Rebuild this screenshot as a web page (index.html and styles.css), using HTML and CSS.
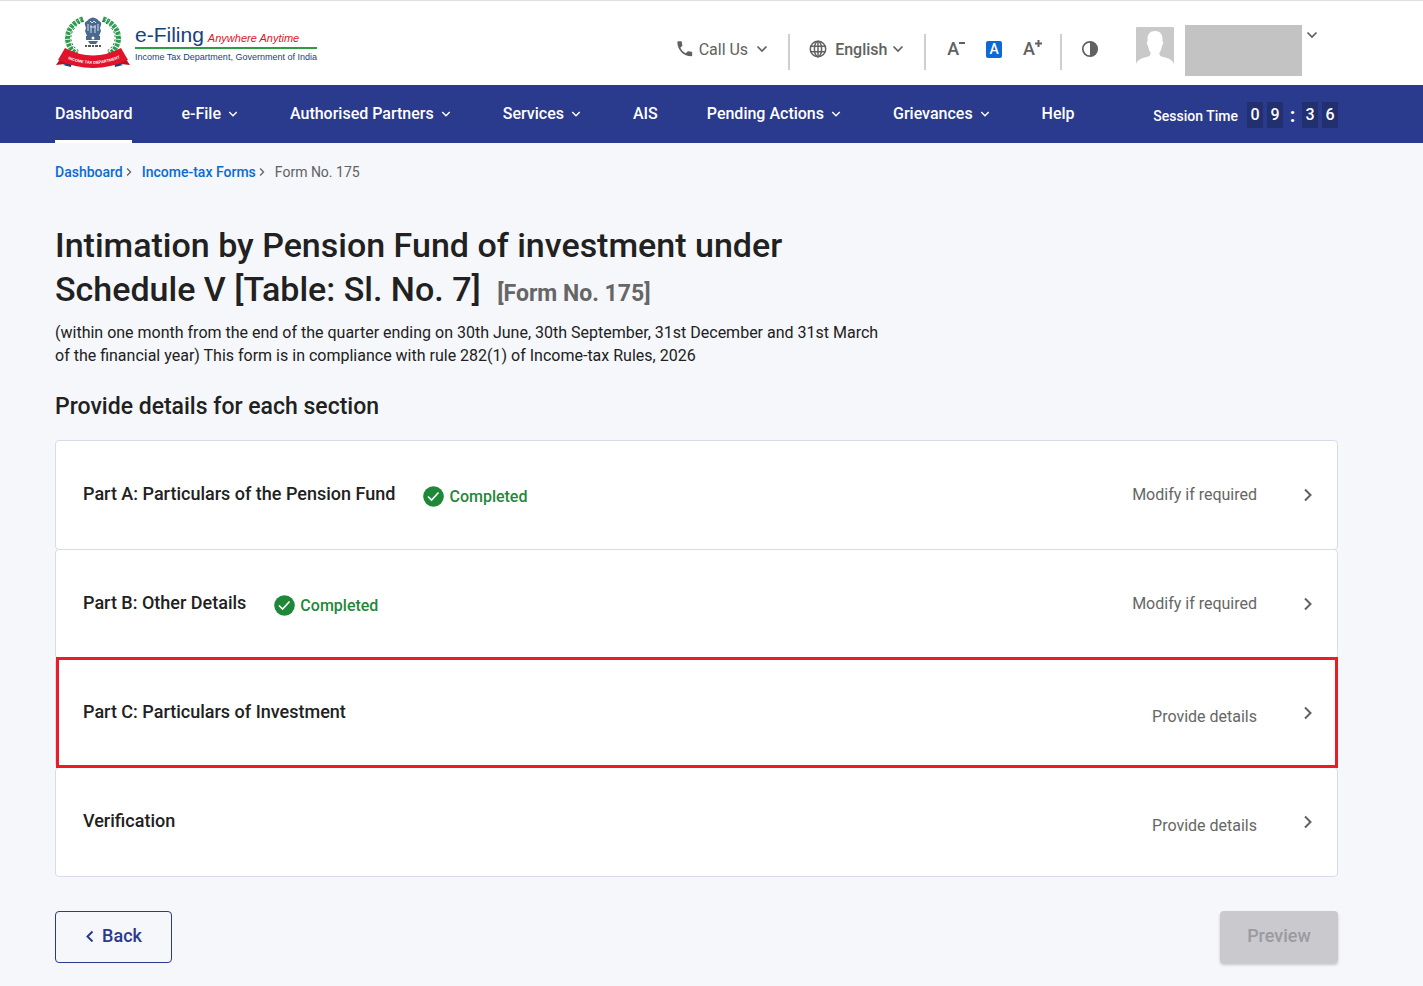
FILE: index.html
```
<!DOCTYPE html>
<html lang="en">
<head>
    <meta charset="UTF-8">
    <meta name="viewport" content="width=device-width, initial-scale=1.0">
    <title>Form No. 175 - e-Filing</title>
    <link rel="stylesheet" href="styles.css">
</head>
<body>

<!-- Shared icons -->
<svg class="sprite" aria-hidden="true">
    <symbol id="chevron" viewBox="0 0 12 12"><path d="M1.5 3.5 6 8l4.500-4.500" fill="none" stroke="currentColor" stroke-width="1.700"/></symbol>
    <symbol id="chevron-right" viewBox="0 0 12 16"><path d="M3 2.500l5.500 5.500L3 13.500" fill="none" stroke="currentColor" stroke-width="2"/></symbol>
    <symbol id="check" viewBox="0 0 21 21"><circle cx="10.500" cy="10.500" r="10.300" fill="#1f8838"/><path d="M5 10.500l3.600 3.600L15.500 6.500" fill="none" stroke="#fff" stroke-width="1.600"/></symbol>
</svg>

<header class="header">
    <a class="logo" href="#">
        <svg class="emblem" viewBox="0 0 76 54" role="img" aria-label="Income Tax Department emblem">
            <!-- wreath -->
            <path d="M28 3C9 9 8 30 22 38M48 3c19 6 20 27 6 35" fill="none" stroke="#2f9b50" stroke-width="5" stroke-dasharray="3 1"/>
            <path d="M26 3C7 10 6 29 19 38M50 3c19 7 20 26 7 35" fill="none" stroke="#9bd3aa" stroke-width="1" stroke-dasharray="1 2"/>
            <path d="M29 5C13 12 12 28 24 35M47 5c16 7 17 23 5 30" fill="none" stroke="#147a38" stroke-width="1" stroke-dasharray="2 2"/>
            <!-- lion capital -->
            <path d="M34 3q4-3 8 0l2 2q3 1 2 4l-1 3 1 3-2 5H32l-2-5 1-3-1-3q-1-3 2-4z" fill="#49698f"/>
            <path d="M35 5l2 2 2-2 2 2M36 9v8M40 9v8M33 8v7M43 8v7M35 11h6" fill="none" stroke="#d7e1ec" stroke-width="1"/>
            <path d="M31 20h14v4H31zM33 25h10l-2 3h-6z" fill="#49698f"/>
            <circle cx="38" cy="22" r="1.500" fill="#fff"/>
            <path d="M30 30h16" stroke="#222" stroke-width="1.500" stroke-dasharray="2 1 3 1"/>
            <!-- ribbon -->
            <path d="M1 49l7-10 8 1 2 9-8-1zM75 49l-7-10-8 1-2 9 8-1z" fill="#b5121b"/>
            <path d="M8 49l9-4-1 6zM68 49l-9-4 1 6z" fill="#17427e"/>
            <path d="M10 32Q38 47 66 32l7 12Q38 60 3 44z" fill="#e3122b"/>
            <path id="ribbon-line" d="M8 41Q38 55 70 40" fill="none"/>
            <text class="ribbon-text"><textPath href="#ribbon-line" startOffset="50%">INCOME TAX DEPARTMENT</textPath></text>
        </svg>
        <span class="logo-words">
            <span class="logo-top"><span class="logo-name">e-Filing</span><em class="logo-tag">Anywhere Anytime</em></span>
            <span class="logo-dept">Income Tax Department, Government of India</span>
        </span>
    </a>

    <div class="tools">
        <button class="tool call" type="button">
            <svg width="18" height="18" viewBox="0 0 24 24" fill="currentColor"><path d="M6.620 10.790c1.440 2.830 3.760 5.140 6.590 6.590l2.200-2.200c.27-.27.67-.36 1.020-.24 1.120.37 2.330.57 3.570.57.55 0 1 .45 1 1V20c0 .55-.45 1-1 1C10.610 21 3 13.390 3 4c0-.55.45-1 1-1h3.500c.55 0 1 .45 1 1 0 1.250.2 2.450.57 3.570.11.35.03.74-.25 1.020l-2.200 2.200z" transform="translate(-1.500 -1.500) scale(1.100)"/></svg>
            <span>Call Us</span>
            <svg width="12" height="12"><use href="#chevron"/></svg>
        </button>
        <span class="divider"></span>
        <label class="tool language">
            <svg width="18" height="18" viewBox="0 0 18 18" fill="none" stroke="currentColor" stroke-width="1.500"><circle cx="9" cy="9" r="7.700"/><ellipse cx="9" cy="9" rx="3.600" ry="7.700"/><path d="M1.500 6.300h15M1.500 11.700h15M9 1v16"/></svg>
            <select aria-label="Language"><option>English</option></select>
            <svg width="12" height="12"><use href="#chevron"/></svg>
        </label>
        <span class="divider"></span>
        <div class="font-sizes">
            <button class="tool size" type="button" aria-label="Decrease font size">A<svg width="6" height="6" viewBox="0 0 6 6"><path d="M0 3h6" stroke="currentColor" stroke-width="2"/></svg></button>
            <button class="tool" type="button" aria-label="Normal font size"><span class="size-current">A</span></button>
            <button class="tool size" type="button" aria-label="Increase font size">A<svg width="7" height="7" viewBox="0 0 7 7"><path d="M0 3.500h7M3.500 0v7" stroke="currentColor" stroke-width="2"/></svg></button>
        </div>
        <span class="divider"></span>
        <button class="tool" type="button" aria-label="Contrast">
            <svg width="18" height="18" viewBox="0 0 18 18"><circle cx="9" cy="9" r="7.200" fill="none" stroke="currentColor" stroke-width="1.700"/><path d="M9 1.500a7.500 7.500 0 0 1 0 15z" fill="currentColor"/></svg>
        </button>
        <div class="profile">
            <svg class="avatar" width="38" height="38" viewBox="0 0 38 38"><rect width="38" height="38" rx="1" fill="#c9c9c9"/><path d="M19 4c5 0 7.500 3 7.500 8v2q1.500 2-.5 5-.5 4-2.500 6.500c-.5 3 1 4 4 4.500 5 1 9 3 10.500 7v1H0v-1c1.500-4 5.500-6 10.500-7 3-.5 4.500-1.500 4-4.500q-2-2.500-2.500-6.500-2-3-.5-5v-2c0-5 2.500-8 7.500-8z" fill="#fff"/></svg>
            <span class="profile-name"></span>
            <button class="profile-menu" type="button" aria-label="Profile menu"><svg width="12" height="12"><use href="#chevron"/></svg></button>
        </div>
    </div>
</header>

<nav class="navbar">
    <div class="menu">
        <a class="active" href="#">Dashboard</a>
        <a href="#">e-File<svg width="16" height="10" viewBox="-2 1 16 10"><use href="#chevron" x="1" y="1" width="10" height="10"/></svg></a>
        <a href="#">Authorised Partners<svg width="16" height="10" viewBox="-2 1 16 10"><use href="#chevron" x="1" y="1" width="10" height="10"/></svg></a>
        <a href="#">Services<svg width="16" height="10" viewBox="-2 1 16 10"><use href="#chevron" x="1" y="1" width="10" height="10"/></svg></a>
        <a href="#">AIS</a>
        <a href="#">Pending Actions<svg width="16" height="10" viewBox="-2 1 16 10"><use href="#chevron" x="1" y="1" width="10" height="10"/></svg></a>
        <a href="#">Grievances<svg width="16" height="10" viewBox="-2 1 16 10"><use href="#chevron" x="1" y="1" width="10" height="10"/></svg></a>
        <a href="#">Help</a>
    </div>
    <div class="session">
        <span class="session-label">Session Time</span>
        <span class="digit">0</span>
        <span class="digit">9</span>
        <span class="colon">:</span>
        <span class="digit">3</span>
        <span class="digit">6</span>
    </div>
</nav>

<main class="content">
    <nav class="breadcrumb" aria-label="Breadcrumb">
        <a href="#">Dashboard</a>
        <svg width="8" height="10" viewBox="0 0 12 16"><use href="#chevron-right"/></svg>
        <a href="#">Income-tax Forms</a>
        <svg width="8" height="10" viewBox="0 0 12 16"><use href="#chevron-right"/></svg>
        <span>Form No. 175</span>
    </nav>

    <div class="form-heading">
        <h1>Intimation by Pension Fund of investment under Schedule V [Table: Sl. No. 7] <span class="form-no">[Form No. 175]</span></h1>
        <p class="description">(within one month from the end of the quarter ending on 30th June, 30th September, 31st December and 31st March of the financial year) This form is in compliance with rule 282(1) of Income-tax Rules, 2026</p>
    </div>

    <h2>Provide details for each section</h2>

    <div class="sections">
        <a class="section" href="#">
            <span class="section-title">Part A: Particulars of the Pension Fund</span>
            <span class="status"><svg width="21" height="21"><use href="#check"/></svg>Completed</span>
            <span class="action">Modify if required</span>
            <svg class="arrow" width="12" height="16"><use href="#chevron-right"/></svg>
        </a>
        <a class="section" href="#">
            <span class="section-title">Part B: Other Details</span>
            <span class="status"><svg width="21" height="21"><use href="#check"/></svg>Completed</span>
            <span class="action">Modify if required</span>
            <svg class="arrow" width="12" height="16"><use href="#chevron-right"/></svg>
        </a>
        <a class="section highlight" href="#">
            <span class="section-title">Part C: Particulars of Investment</span>
            <span class="action pending">Provide details</span>
            <svg class="arrow" width="12" height="16"><use href="#chevron-right"/></svg>
        </a>
        <a class="section" href="#">
            <span class="section-title">Verification</span>
            <span class="action pending">Provide details</span>
            <svg class="arrow" width="12" height="16"><use href="#chevron-right"/></svg>
        </a>
    </div>

    <div class="buttons">
        <button class="btn back" type="button"><svg width="9" height="13" viewBox="0 0 9 13"><path d="M7.500 2.500l-5 5 5 5" fill="none" stroke="currentColor" stroke-width="2"/></svg>Back</button>
        <button class="btn preview" type="button" disabled>Preview</button>
    </div>
</main>

</body>
</html>
```
FILE: styles.css
```
* {
    box-sizing: border-box;
}
body {
    margin: 0;
    background-color: #f5f7fb;
    color: #212121;
    font-family: Roboto, "Liberation Sans", sans-serif;
    font-size: 16px;
}
a {
    color: inherit;
    text-decoration: none;
}
button, select {
    padding: 0;
    border: none;
    background: none;
    color: inherit;
    font: inherit;
    cursor: pointer;
}
svg {
    flex: none;
}
.sprite {
    display: none;
}

/* Header */
.header {
    display: flex;
    justify-content: space-between;
    height: 85px;
    padding: 0 105px 0 55px;
    border-top: 1px solid #e0e0e0;
    background-color: white;
}
.logo {
    display: flex;
    gap: 4px;
    padding-top: 15px;
}
.emblem {
    width: 76px;
    height: 54px;
}
.ribbon-text {
    fill: white;
    font-family: "Liberation Sans", sans-serif;
    font-size: 4px;
    font-weight: bold;
    text-anchor: middle;
}
.logo-words {
    display: flex;
    flex-direction: column;
    padding-top: 6px;
    color: #17427e;
    font-family: "Liberation Sans", sans-serif;
    white-space: nowrap;
}
.logo-top {
    display: flex;
    align-items: baseline;
    gap: 4px;
    height: 27px;
    border-bottom: 2px solid #2f9b44;
    line-height: 25px;
}
.logo-name {
    font-size: 21px;
}
.logo-tag {
    color: #e3122b;
    font-size: 11px;
}
.logo-dept {
    font-size: 9px;
    line-height: 16px;
}
.tools {
    display: flex;
    align-items: center;
    height: 36px;
    margin-top: 33px;
    color: #616161;
}
.tool {
    display: flex;
    align-items: center;
    padding-bottom: 6px;
}
.call span {
    margin: 0 8px 0 5px;
}
.divider {
    width: 2px;
    height: 36px;
    margin: 0 19px 0 20px;
    background-color: #cfcfcf;
}
.language {
    font-weight: 500;
}
.language select {
    margin: 0 4px 0 8px;
    appearance: none;
}
.font-sizes {
    display: flex;
    align-items: center;
    gap: 21px;
    margin-left: 2px;
    margin-right: -2px;
}
.size {
    align-items: flex-start;
    font-size: 18px;
    font-weight: 500;
    line-height: 18px;
}
.size-current {
    width: 16px;
    border-radius: 2px;
    background-color: #0b6bd3;
    color: white;
    font-size: 14px;
    font-weight: 500;
    line-height: 17px;
}
.profile {
    display: flex;
    align-items: flex-start;
    height: 54px;
    margin-left: 37px;
}
.avatar {
    margin-top: 2px;
}
.profile-name {
    width: 117px;
    height: 51px;
    margin: 0 4px 0 11px;
    background-color: #c3c3c3;
}
.profile-menu {
    padding-top: 4px;
    line-height: 12px;
}

/* Navigation */
.navbar {
    display: flex;
    justify-content: space-between;
    height: 58px;
    padding: 0 85px 0 55px;
    background-color: #2a3a8c;
    color: white;
    font-weight: 500;
}
.menu {
    display: flex;
    gap: 49px;
    white-space: nowrap;
}
.menu a {
    display: flex;
    align-items: center;
    padding-top: 2px;
    border-bottom: 3px solid transparent;
}
.menu a svg {
    margin-left: 4px;
}
.menu .active {
    border-bottom-color: white;
}
.session {
    display: flex;
    align-items: center;
    gap: 4px;
    padding-top: 2px;
    white-space: nowrap;
}
.session-label {
    margin-right: 5px;
    padding-top: 2px;
    font-size: 14px;
}
.digit {
    width: 16px;
    background-color: #22306f;
    line-height: 26px;
    text-align: center;
}
.colon {
    width: 11px;
    font-size: 20px;
    font-weight: 700;
    text-align: center;
}

/* Form */
.content {
    padding: 20px 85px 23px 55px;
}
.breadcrumb {
    display: flex;
    align-items: center;
    color: #616161;
    font-size: 14px;
    line-height: 18px;
}
.breadcrumb a {
    color: #0b6bd3;
    font-weight: 500;
}
.breadcrumb svg {
    margin: 0 9px 0 2px;
}
.form-heading {
    max-width: 840px;
}
h1 {
    margin: 42px 0 0;
    padding-right: 80px;
    font-size: 34px;
    font-weight: 500;
    line-height: 44px;
}
.form-no {
    display: inline-block;
    margin-left: 8px;
    color: #666;
    font-size: 23px;
    font-weight: 700;
    line-height: 28px;
}
.description {
    margin: 10px 0 0;
    line-height: 23px;
}
h2 {
    margin: 26px 0 19px;
    font-size: 23px;
    font-weight: 500;
    line-height: 28px;
}
.section {
    position: relative;
    display: flex;
    align-items: center;
    height: 110px;
    padding: 0 23px 4px 27px;
    border: 1px solid #dadbe8;
    border-radius: 4px;
    background-color: white;
}
.section + .section {
    margin-top: -1px;
}
.highlight {
    z-index: 1;
}
.highlight::after {
    content: "";
    position: absolute;
    inset: -2px -1px -1px 0;
    border: 3px solid #ed1c24;
}
.section-title {
    font-size: 18px;
    font-weight: 500;
}
.status {
    display: flex;
    align-items: center;
    gap: 5px;
    margin-left: 28px;
    padding-top: 6px;
    color: #1f8838;
    font-weight: 500;
}
.action {
    margin-left: auto;
    padding-top: 2px;
    color: #666;
}
.pending {
    padding-top: 10px;
}
.arrow {
    margin: 4px 0 0 45px;
    color: #616161;
}
.buttons {
    display: flex;
    justify-content: space-between;
    margin-top: 34px;
}
.btn {
    display: flex;
    align-items: center;
    justify-content: center;
    gap: 8px;
    height: 52px;
    padding-bottom: 3px;
    border-radius: 4px;
    font-size: 18px;
    font-weight: 500;
}
.back {
    width: 117px;
    border: 1px solid #2a3a8c;
    color: #2a3a8c;
}
.preview {
    width: 118px;
    background-color: #c9c9ce;
    box-shadow: 0 2px 3px rgba(0, 0, 0, 0.2);
    color: #9b9b9f;
}
```
